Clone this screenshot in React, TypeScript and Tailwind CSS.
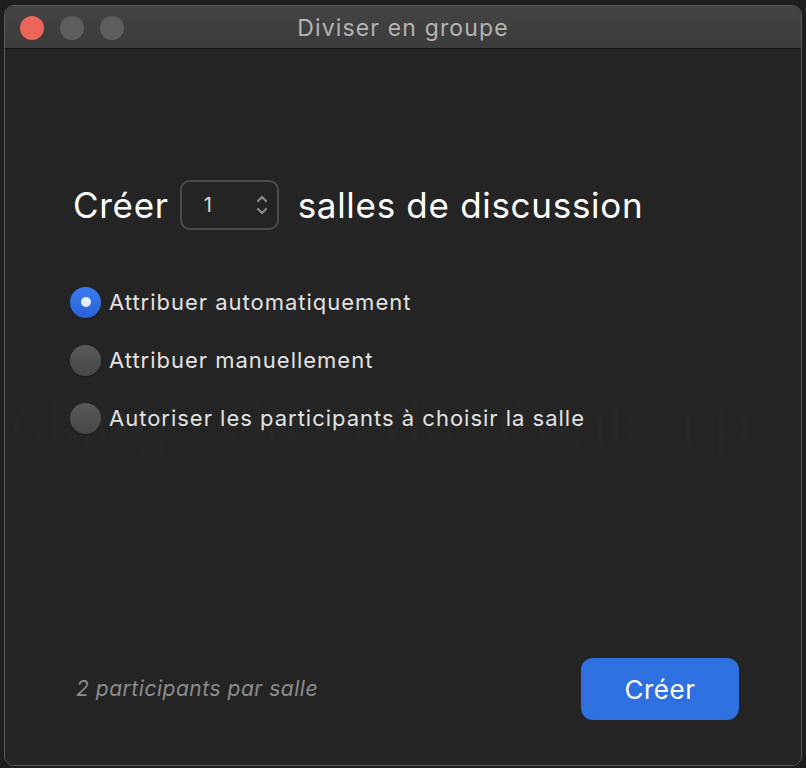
import React from 'react';

const font = { fontFamily: 'Inter, "Liberation Sans", Arial, sans-serif' };

function Radio({ checked }: { checked?: boolean }) {
  if (checked) {
    return (
      <span className="flex h-[31px] w-[31px] shrink-0 items-center justify-center rounded-full bg-gradient-to-b from-[#3a7cf0] to-[#2a62d4] shadow-[0_1px_1px_rgba(0,0,0,0.4)]">
        <span className="h-[10px] w-[10px] rounded-full bg-[#e8eefc]" />
      </span>
    );
  }
  return (
    <span className="h-[31px] w-[31px] shrink-0 rounded-full bg-gradient-to-b from-[#5a5a5a] to-[#464646] shadow-[0_1px_1px_rgba(0,0,0,0.4)]" />
  );
}

const OPTIONS = [
  { label: 'Attribuer automatiquement', checked: true },
  { label: 'Attribuer manuellement', checked: false },
  { label: 'Autoriser les participants à choisir la salle', checked: false },
];

export default function App() {
  return (
    <div className="h-[768px] w-[806px] bg-[#1e1e1e] pl-[4px] pr-[4px] pt-[5px] pb-[2px]" style={font}>
      <div className="flex h-full flex-col overflow-hidden rounded-[10px] border border-[#5a5a5a]">
        {/* title bar */}
        <div className="relative flex h-[43px] shrink-0 items-center justify-center border-b border-[#141414] bg-gradient-to-b from-[#444444] to-[#3b3b3b] pt-[3px]">
          <div className="absolute left-[15px] top-[10px] flex gap-[16px]">
            <span className="h-[24px] w-[24px] rounded-full bg-[#ec6559]" />
            <span className="h-[24px] w-[24px] rounded-full bg-[#5e5e5e]" />
            <span className="h-[24px] w-[24px] rounded-full bg-[#5e5e5e]" />
          </div>
          <span className="text-[23px] tracking-[0.05em] text-[#b4b4b4]">Diviser en groupe</span>
        </div>

        {/* body */}
        <div className="relative flex flex-1 flex-col bg-[#242424] pl-[65px] pr-[62px] pb-[45px]">
          {/* ghost text bleeding through from the window behind */}
          <div className="pointer-events-none absolute left-0 right-0 top-[342px] text-[62px] leading-none whitespace-nowrap text-white/[0.01]">
            <span className="absolute right-[calc(100%-165px)]">cking</span>
            <span className="absolute left-[221px]">Salle de réunion p</span>
          </div>

          <div className="relative mt-[130px] flex items-center">
            <span className="ml-[3px] text-[35px] tracking-[0.02em] text-white">Créer</span>
            <div className="ml-[11px] flex h-[50px] w-[99px] items-center justify-between rounded-[10px] border-2 border-[#4c4c4c] pl-[22px] pr-[9px]">
              <span className="text-[20px] text-[#d8d8d8]">1</span>
              <svg width="12" height="26" viewBox="0 0 12 26" fill="none" stroke="#8a8a8a" strokeWidth="2.2" strokeLinecap="round" strokeLinejoin="round">
                <path d="M2 9 L6 5 L10 9" />
                <path d="M2 17 L6 21 L10 17" />
              </svg>
            </div>
            <span className="ml-[19px] text-[35px] tracking-[0.02em] text-white">salles de discussion</span>
          </div>

          <div className="relative mt-[54px] flex flex-col gap-[25px]">
            {OPTIONS.map((o) => (
              <div key={o.label} className="flex h-[33px] items-center gap-[8px]">
                <Radio checked={o.checked} />
                <span className="text-[22px] tracking-[0.045em] text-[#e2e2e2]">{o.label}</span>
              </div>
            ))}
          </div>

          <div className="relative mt-auto flex items-center justify-between">
            <span className="pl-[6px] text-[21px] italic tracking-[0.025em] text-[#8c8c8c]">2 participants par salle</span>
            <button className="flex h-[62px] w-[158px] items-center justify-center rounded-[12px] bg-[#2f70e0] text-[26px] tracking-[0.02em] text-white">
              Créer
            </button>
          </div>
        </div>
      </div>
    </div>
  );
}
